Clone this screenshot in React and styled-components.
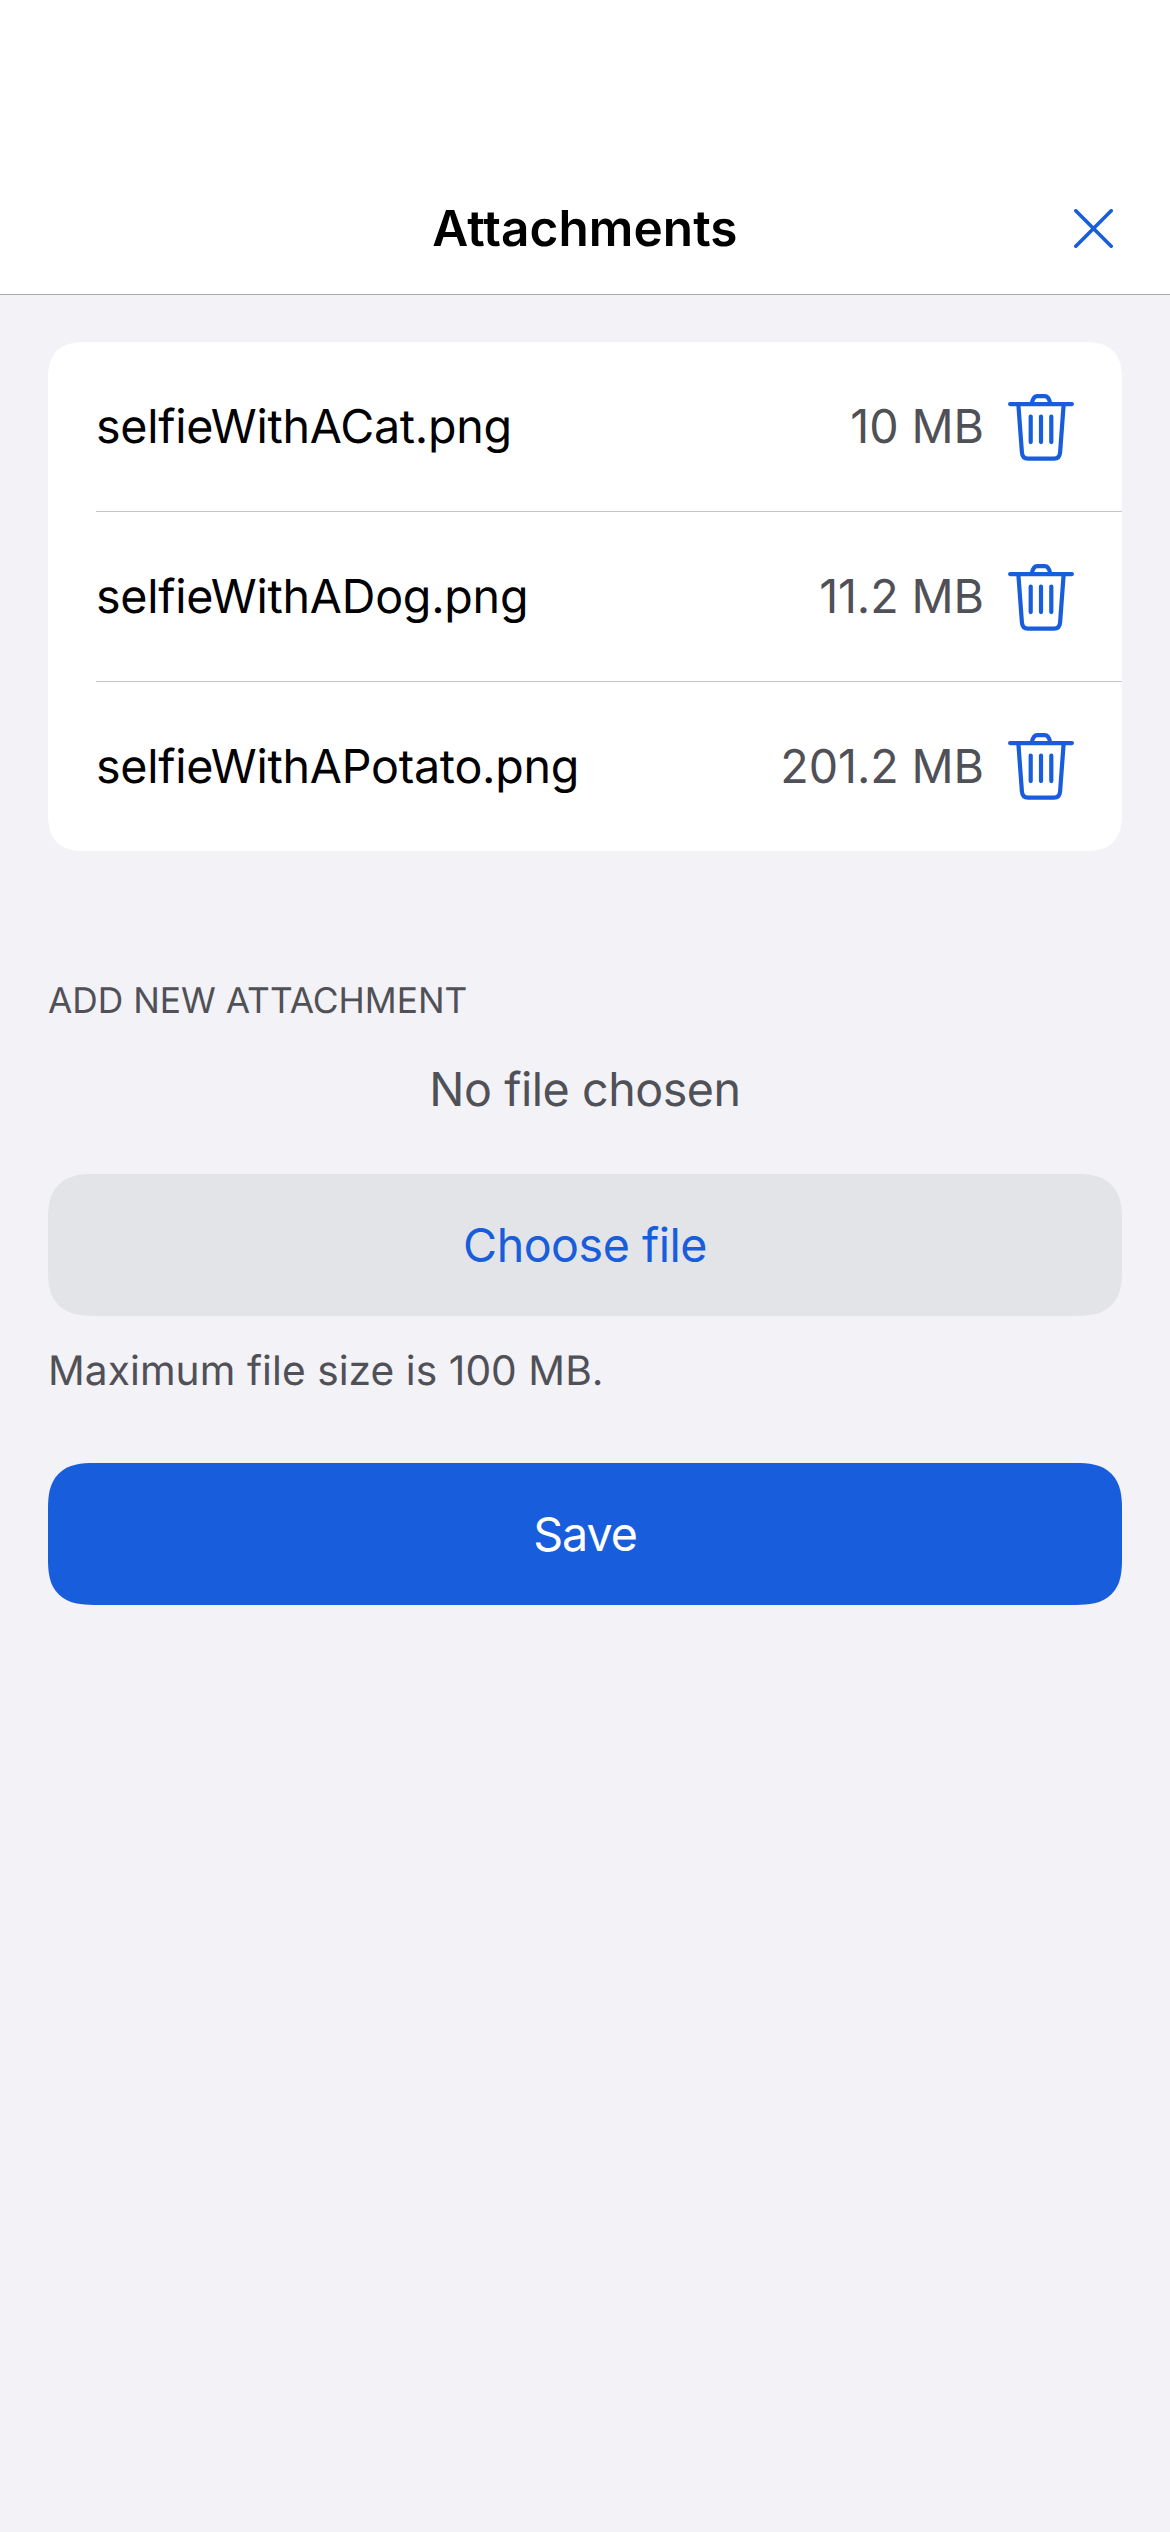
import React from 'react';
import styled, { createGlobalStyle, css } from 'styled-components';

const colors = {
  page: '#f2f2f7',
  surface: '#ffffff',
  text: '#000000',
  muted: '#505057',
  accent: '#185ddc',
  secondary: '#e2e4e8',
  headerLine: '#a8a7ab',
  divider: '#c5c5c7',
};

const GlobalStyle = createGlobalStyle`
  html, body {
    margin: 0;
    background: ${colors.page};
  }
  body {
    font-family: Inter, Roboto, "Liberation Sans", sans-serif;
    font-size: 46.6px;
    color: ${colors.text};
    text-rendering: geometricPrecision;
    -webkit-font-smoothing: antialiased;
  }
  *, *::before, *::after {
    box-sizing: border-box;
  }
`;

const continuousCorners = (radius) => css`
  border-radius: ${radius * 1.06}px;
  @supports (corner-shape: superellipse(1.4)) {
    border-radius: ${radius * 1.28}px;
    corner-shape: superellipse(1.4);
  }
`;

const Screen = styled.div`
  display: flex;
  flex-direction: column;
  min-height: 2532px;
  background: ${colors.page};
`;

const Header = styled.header`
  display: grid;
  grid-template-columns: 1fr auto 1fr;
  align-items: center;
  height: 295px;
  padding: 162px 48px 0;
  background: ${colors.surface};
  border-bottom: 1px solid ${colors.headerLine};
`;

const Title = styled.h1`
  grid-column: 2;
  margin: 0;
  font-size: 49.5px;
  font-weight: 600;
  line-height: 60px;
  letter-spacing: 0.08px;
`;

const IconButton = styled.button`
  display: flex;
  justify-content: center;
  align-items: center;
  padding: 0;
  border: 0;
  background: none;
  color: ${colors.accent};
`;

const CloseButton = styled(IconButton)`
  justify-self: end;
  width: 57px;
  height: 57px;
`;

const Content = styled.main`
  display: flex;
  flex-direction: column;
  padding: 47px 48px 0;
`;

const FileList = styled.ul`
  margin: 0 0 128px;
  padding: 0;
  list-style: none;
  background: ${colors.surface};
  ${continuousCorners(30)}
`;

const FileRow = styled.li`
  display: flex;
  align-items: center;
  height: 170px;
  margin-left: 48px;
  padding-right: 48px;
  background: linear-gradient(${colors.divider}, ${colors.divider}) bottom / 100% 1px no-repeat;

  &:last-child {
    height: 169px;
    background: none;
  }
`;

const FileName = styled.span`
  flex: 1;
  line-height: 56px;
  letter-spacing: -0.25px;
`;

const FileSize = styled.span`
  margin-right: 24px;
  line-height: 56px;
  letter-spacing: -0.08px;
  color: ${colors.muted};
`;

const SectionTitle = styled.h2`
  margin: 0 0 39px;
  font-size: 35.3px;
  font-weight: 400;
  line-height: 43px;
  text-transform: uppercase;
  color: ${colors.muted};
`;

const Status = styled.p`
  margin: 0 0 55px;
  line-height: 58px;
  letter-spacing: -0.45px;
  text-align: center;
  color: ${colors.muted};
`;

const Hint = styled.p`
  margin: 29px 0 67px;
  font-size: 40.7px;
  line-height: 51px;
  letter-spacing: 0.06px;
  color: ${colors.muted};
`;

const Button = styled.button`
  display: flex;
  justify-content: center;
  align-items: center;
  height: 142px;
  padding: 0;
  border: 0;
  font: inherit;
  line-height: 56px;
  letter-spacing: ${(p) => (p.$primary ? '-1.1px' : '-0.5px')};
  color: ${(p) => (p.$primary ? colors.surface : colors.accent)};
  background: ${(p) => (p.$primary ? colors.accent : colors.secondary)};
  ${continuousCorners(36)}
`;

const CloseIcon = () => (
  <svg width="39" height="39" viewBox="0 0 39 39" fill="none" stroke="currentColor" strokeWidth="3.6" strokeLinecap="round">
    <path d="M1.8 1.8 37.2 37.2M37.2 1.8 1.8 37.2" />
  </svg>
);

const TrashIcon = () => (
  <svg width="66" height="67" viewBox="0 0 66 67" fill="none" stroke="currentColor" strokeWidth="4.2" strokeLinecap="round" strokeLinejoin="round">
    <path d="M2.1 10.1H63.9" />
    <path d="M23.8 9.3C24.6 5.2 26.3 2.1 29.3 2.1H36.7C39.7 2.1 41.4 5.2 42.2 9.3" />
    <path d="M10.4 11 13.9 58.3C14.2 62.2 16.4 64.6 20 64.6H46C49.6 64.6 51.8 62.2 52.1 58.3L55.6 11" />
    <path d="M22.7 22.5V48.1M33 22.5V48.1M43.3 22.5V48.1" />
  </svg>
);

const files = [
  { name: 'selfieWithACat.png', size: '10 MB' },
  { name: 'selfieWithADog.png', size: '11.2 MB' },
  { name: 'selfieWithAPotato.png', size: '201.2 MB' },
];

export default function App() {
  return (
    <>
      <GlobalStyle />
      <Screen>
        <Header>
          <Title>Attachments</Title>
          <CloseButton aria-label="Close">
            <CloseIcon />
          </CloseButton>
        </Header>
        <Content>
          <FileList>
            {files.map((file) => (
              <FileRow key={file.name}>
                <FileName>{file.name}</FileName>
                <FileSize>{file.size}</FileSize>
                <IconButton aria-label={`Delete ${file.name}`}>
                  <TrashIcon />
                </IconButton>
              </FileRow>
            ))}
          </FileList>
          <SectionTitle>Add new attachment</SectionTitle>
          <Status>No file chosen</Status>
          <Button>Choose file</Button>
          <Hint>Maximum file size is 100 MB.</Hint>
          <Button $primary>Save</Button>
        </Content>
      </Screen>
    </>
  );
}
